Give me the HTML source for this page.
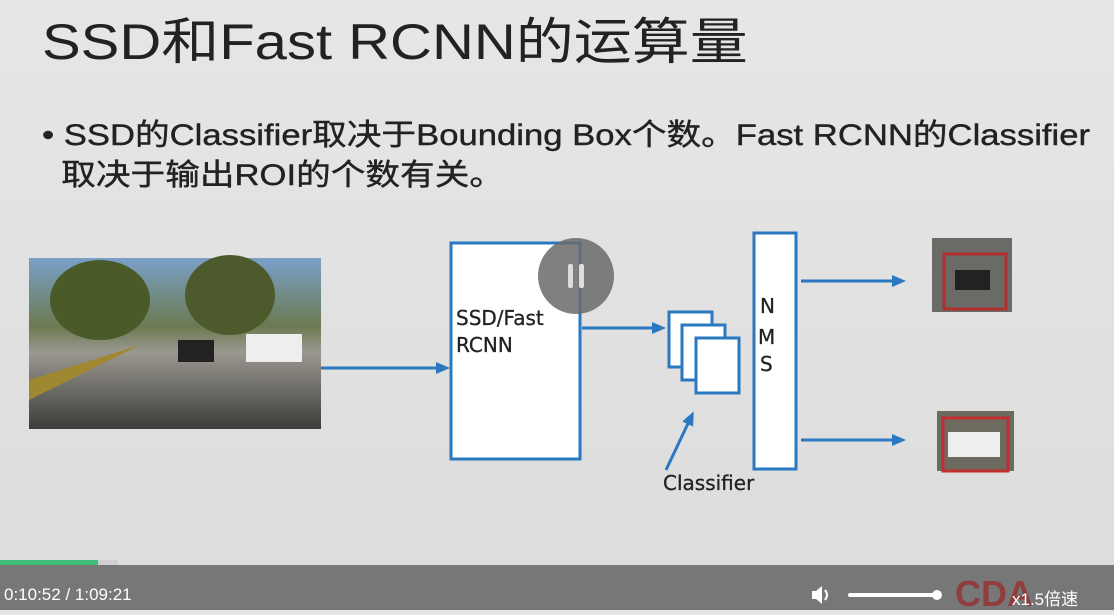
<!DOCTYPE html>
<html><head><meta charset="utf-8"><style>
body{margin:0;width:1114px;height:610px;overflow:hidden;background:linear-gradient(#e6e6e6,#dcdcdc);font-family:"Liberation Sans","Noto Sans CJK SC",sans-serif;position:relative}
.t{position:absolute;left:42px;top:2px;font-size:50px;color:#222;white-space:nowrap;transform-origin:0 0;transform:scaleX(1.16)}
.b{position:absolute;left:42px;top:116px;font-size:30px;color:#222;line-height:40px;white-space:nowrap;transform-origin:0 0;transform:scaleX(1.155);-webkit-text-stroke:0.4px #222}
.bar{position:absolute;left:0;top:565px;width:1114px;height:45px;background:#777}
</style></head><body>
<div class="t">SSD和Fast RCNN的运算量</div>
<div class="b">• SSD的Classifier取决于Bounding Box个数。Fast RCNN的Classifier<br>&nbsp;&nbsp;取决于输出ROI的个数有关。</div>
<svg width="1114" height="565" style="position:absolute;left:0;top:0">
<defs>
<linearGradient id="sky" x1="0" y1="0" x2="0" y2="1"><stop offset="0" stop-color="#7aa0c8"/><stop offset="0.4" stop-color="#6b7a50"/><stop offset="0.55" stop-color="#9a9890"/><stop offset="1" stop-color="#3e3c3a"/></linearGradient>
<marker id="a" markerWidth="14" markerHeight="12" refX="10" refY="6" orient="auto" markerUnits="userSpaceOnUse"><path d="M0,0L14,6L0,12z" fill="#2a78c0"/></marker>
</defs>
<rect x="29" y="258" width="292" height="171" fill="url(#sky)"/>
<ellipse cx="100" cy="300" rx="50" ry="40" fill="#4a5a28"/><ellipse cx="230" cy="295" rx="45" ry="40" fill="#4c5a2c"/>
<polygon points="29,400 140,345 29,380" fill="#a08830"/>
<rect x="178" y="340" width="36" height="22" fill="#222"/><rect x="246" y="334" width="56" height="28" fill="#eee"/>
<g stroke="#2a78c0" stroke-width="3" fill="none">
<line x1="321" y1="368" x2="446" y2="368" marker-end="url(#a)"/>
<rect x="451" y="243" width="129" height="216" fill="#fff"/>
<line x1="582" y1="328" x2="662" y2="328" marker-end="url(#a)"/>
<rect x="669" y="312" width="43" height="55" fill="#fff"/>
<rect x="682" y="325" width="43" height="55" fill="#fff"/>
<rect x="696" y="338" width="43" height="55" fill="#fff"/>
<line x1="666" y1="470" x2="692" y2="415" marker-end="url(#a)"/>
<rect x="754" y="233" width="42" height="236" fill="#fff"/>
<line x1="801" y1="281" x2="902" y2="281" marker-end="url(#a)"/>
<line x1="801" y1="440" x2="902" y2="440" marker-end="url(#a)"/>
</g>
<rect x="932" y="238" width="80" height="74" fill="#6a6a66"/><rect x="944" y="254" width="62" height="55" fill="none" stroke="#b03030" stroke-width="3"/><rect x="955" y="270" width="35" height="20" fill="#222"/>
<rect x="937" y="411" width="77" height="60" fill="#6d6a60"/><rect x="943" y="418" width="65" height="53" fill="none" stroke="#c03030" stroke-width="3"/><rect x="948" y="432" width="52" height="25" fill="#eee"/>
<circle cx="576" cy="276" r="38" fill="#6a6a6a" opacity="0.85"/>
<rect x="568" y="264" width="5" height="24" rx="2" fill="#ddd"/><rect x="579" y="264" width="5" height="24" rx="2" fill="#ddd"/>
<g font-size="20" fill="#222" font-family="DejaVu Sans,sans-serif" stroke="#222" stroke-width="0.3">
<text x="456" y="325">SSD/Fast</text>
<text x="456" y="352">RCNN</text>
<text x="760" y="313">N</text>
<text x="758" y="344">M</text>
<text x="760" y="371">S</text>
<text x="663" y="490">Classifier</text>
</g>
<rect x="0" y="560" width="118" height="5" fill="#cfcfcf"/><rect x="0" y="560" width="98" height="5" fill="#3fc07a"/>
</svg>
<div class="bar">
<div style="position:absolute;left:4px;top:20px;color:#fff;font-size:17px">0:10:52 / 1:09:21</div>
<svg style="position:absolute;left:808px;top:18px" width="140" height="24"><path d="M4,8h4l6-5v18l-6-5h-4z" fill="#fff"/><path d="M17,7q4,5 0,10" stroke="#fff" stroke-width="2" fill="none"/><rect x="40" y="10" width="90" height="4" rx="2" fill="#fff"/><circle cx="129" cy="12" r="5" fill="#fff"/></svg>
<div style="position:absolute;left:955px;top:8px;color:#9a2a2a;font-size:36px;font-weight:bold;opacity:.75">CDA</div>
<div style="position:absolute;left:1012px;top:20px;color:#fff;font-size:17px">x1.5倍速</div>
</div>
</body></html>
